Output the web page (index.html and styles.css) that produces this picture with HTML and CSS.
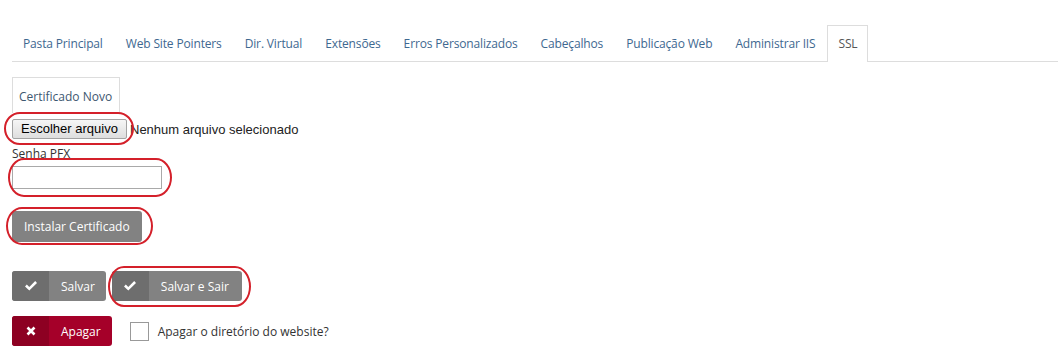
FILE: index.html
```html
<!DOCTYPE html>
<html>
<head>
    <title>SSL</title>
    <link rel="stylesheet" href="styles.css">
</head>
<body>
    <div class="page">
        <ul class="tabs">
            <li><a>Pasta Principal</a></li>
            <li><a>Web Site Pointers</a></li>
            <li><a>Dir. Virtual</a></li>
            <li><a>Extensões</a></li>
            <li><a>Erros Personalizados</a></li>
            <li><a>Cabeçalhos</a></li>
            <li><a>Publicação Web</a></li>
            <li><a>Administrar IIS</a></li>
            <li class="active"><a>SSL</a></li>
        </ul>

        <div class="subtab">Certificado Novo</div>

        <div class="file-row">
            <span class="file-btn">Escolher arquivo</span>
            <span class="file-name">Nenhum arquivo selecionado</span>
            <span class="mark mark-file"></span>
        </div>

        <label class="field-label">Senha PFX</label>
        <div class="field-wrap">
            <input type="password" class="pfx-input">
            <span class="mark mark-input"></span>
        </div>

        <div class="install-wrap">
            <button class="btn-gray">Instalar Certificado</button>
            <span class="mark mark-install"></span>
        </div>

        <div class="actions">
            <button class="btn-icon gray">
                <span class="ico"><svg width="14" height="12" viewBox="0 0 14 12"><path d="M1 6.5 L2.8 4.6 L5.3 7 L11.2 1 L13 2.9 L5.3 10.6 Z" fill="#fff"/></svg></span>
                <span class="lbl">Salvar</span>
            </button>
            <div class="save-exit">
                <button class="btn-icon gray">
                    <span class="ico"><svg width="14" height="12" viewBox="0 0 14 12"><path d="M1 6.5 L2.8 4.6 L5.3 7 L11.2 1 L13 2.9 L5.3 10.6 Z" fill="#fff"/></svg></span>
                    <span class="lbl wide">Salvar e Sair</span>
                </button>
                <span class="mark mark-exit"></span>
            </div>
        </div>

        <div class="delete-row">
            <button class="btn-icon red">
                <span class="ico"><svg width="10" height="10" viewBox="0 0 10 10"><path d="M1.5 1.5 L8.5 8.5 M8.5 1.5 L1.5 8.5" stroke="#fff" stroke-width="2.6"/></svg></span>
                <span class="lbl">Apagar</span>
            </button>
            <label class="check"><span class="box"></span>Apagar o diretório do website?</label>
        </div>
    </div>
</body>
</html>
```

FILE: styles.css
```css
body {
    margin: 0;
    font-family: "Open Sans", "Noto Sans", sans-serif;
    font-size: 12px;
    color: #333;
    background: #fff;
}

.page {
    padding: 25px 0 0 12px;
}

/* tabs */
.tabs {
    list-style: none;
    margin: 0;
    padding: 0;
    display: flex;
    border-bottom: 1px solid #ddd;
}
.tabs li {
    margin-right: 1px;
}
.tabs a {
    display: block;
    padding: 10px 10px 9px;
    line-height: 16px;
    letter-spacing: -0.15px;
    color: #3e6890;
    border: 1px solid transparent;
    border-bottom: none;
    margin-bottom: -1px;
}
.tabs .active a {
    color: #555;
    border-color: #ddd;
    background: #fff;
    padding-bottom: 10px;
}

.subtab {
    display: inline-block;
    margin-top: 15px;
    padding: 10px 7px 8px 6px;
    line-height: 17px;
    color: #3e5770;
    border: 1px solid #ddd;
    border-bottom: none;
}

/* file picker */
.file-row {
    position: relative;
    display: flex;
    align-items: center;
    margin-top: 6px;
    font-family: "Liberation Sans", Arial, sans-serif;
    font-size: 13px;
}
.file-btn {
    display: inline-block;
    width: 113px;
    height: 18px;
    line-height: 18px;
    text-align: center;
    color: #000;
    background: linear-gradient(#f6f6f6, #dedede);
    border: 1px solid #a3a3a3;
    border-radius: 2px;
}
.file-name {
    margin-left: 3px;
    color: #222;
}

.field-label {
    display: block;
    margin-top: 6px;
    line-height: 18px;
}
.field-wrap {
    position: relative;
    margin-top: 3px;
}
.pfx-input {
    display: block;
    width: 146px;
    height: 19px;
    margin: 0;
    padding: 1px;
    border: 1px solid #a9a9a9;
    box-sizing: content-box;
}

.install-wrap {
    position: relative;
    margin-top: 22px;
}
.btn-gray {
    display: block;
    height: 31px;
    padding: 0 12px;
    font-family: inherit;
    font-size: 12px;
    color: #fff;
    background: #828282;
    border: none;
    border-radius: 3px;
}

/* icon buttons */
.actions {
    display: flex;
    margin-top: 29px;
}
.save-exit {
    position: relative;
    margin-left: 6px;
}
.btn-icon {
    display: flex;
    height: 30px;
    padding: 0;
    font-family: inherit;
    font-size: 12px;
    color: #fff;
    border: none;
    border-radius: 3px;
    overflow: hidden;
}
.btn-icon .ico {
    width: 37px;
    height: 100%;
    display: flex;
    align-items: center;
    justify-content: center;
}
.btn-icon .lbl {
    height: 100%;
    display: flex;
    align-items: center;
    padding: 0 11px 0 12px;
}
.btn-icon .lbl.wide {
    padding: 0 13px 0 12px;
}
.btn-icon.gray {
    background: #828282;
}
.btn-icon.gray .ico {
    background: #6e6e6e;
}
.btn-icon.red {
    background: #a50029;
}
.btn-icon.red .ico {
    background: #8d0022;
}

.delete-row {
    display: flex;
    align-items: center;
    margin-top: 15px;
}
.check {
    display: flex;
    align-items: center;
    margin-left: 18px;
}
.check .box {
    flex: none;
    width: 17px;
    height: 17px;
    border: 1px solid #999;
    margin-right: 9px;
    background: #fff;
}

/* red annotation rings */
.mark {
    position: absolute;
    border: 2px solid #d4202a;
    border-radius: 16px / 50%;
    pointer-events: none;
}
.mark-file {
    left: -8px;
    top: -7px;
    width: 126px;
    height: 29px;
}
.mark-input {
    left: -4px;
    top: -8px;
    width: 160px;
    height: 35px;
}
.mark-install {
    left: -6px;
    top: -4px;
    width: 143px;
    height: 34px;
}
.mark-exit {
    left: -4px;
    top: -5px;
    width: 139px;
    height: 37px;
}
```
